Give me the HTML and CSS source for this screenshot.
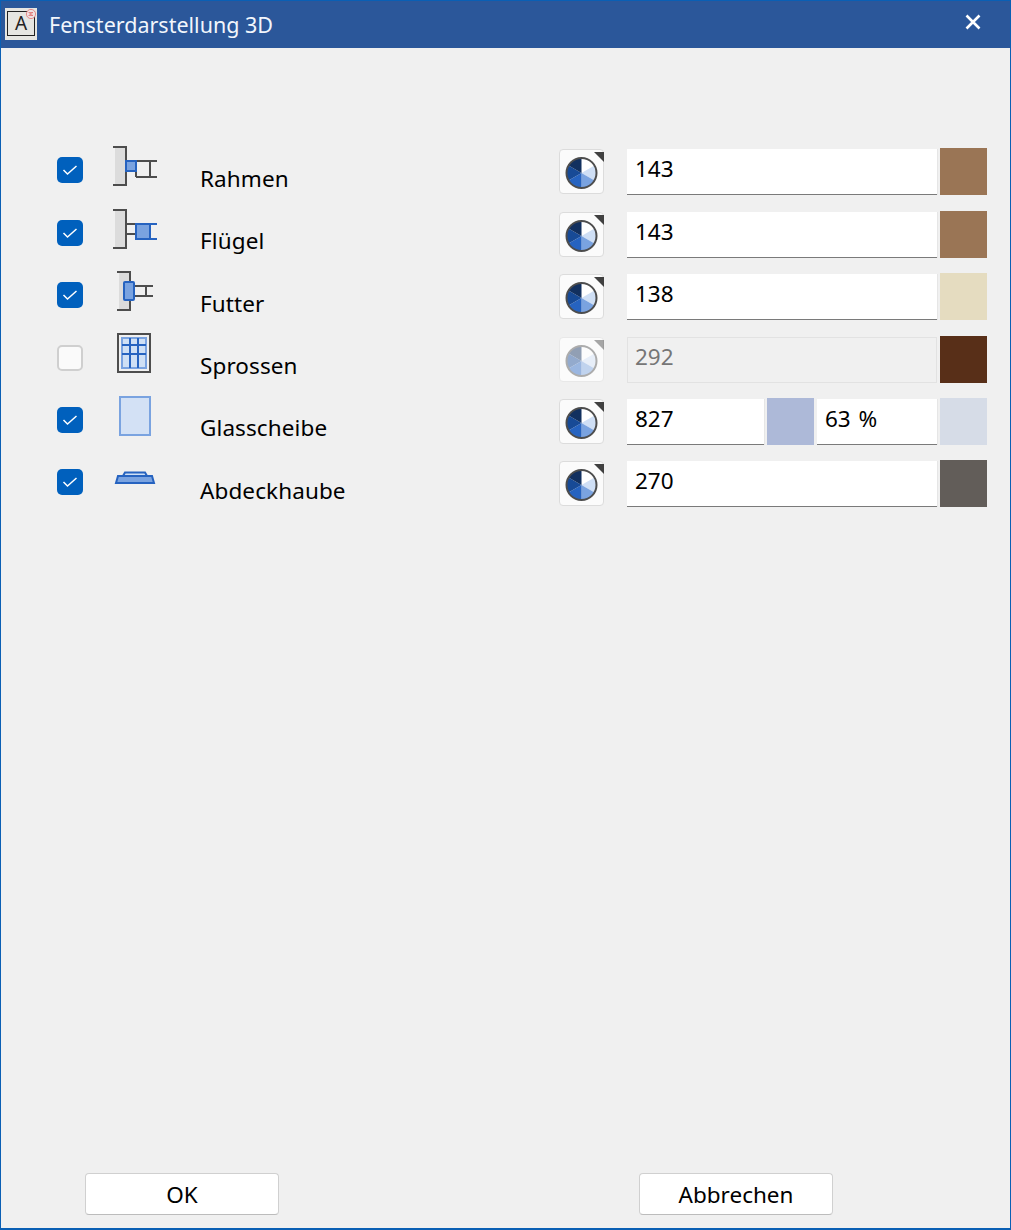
FILE: index.html
```html
<!DOCTYPE html>
<html lang="de">
<head>
<meta charset="utf-8">
<title>Fensterdarstellung 3D</title>
<link rel="stylesheet" href="styles.css">
</head>
<body>
<svg class="defs" width="0" height="0" aria-hidden="true">
  <defs>
    <symbol id="check" viewBox="0 0 26 26"><path d="M6.5 13 L10.5 17 L19.5 9" fill="none" stroke="#fff" stroke-width="1.5"/></symbol>
    <symbol id="pie" viewBox="0 0 45 45">
      <path d="M22.5 9 L22.5 24 L35.5 16.5 A15 15 0 0 0 22.5 9Z" fill="#ffffff"/>
      <path d="M22.5 24 L35.5 16.5 A15 15 0 0 1 35.5 31.5Z" fill="#cfdff5"/>
      <path d="M22.5 24 L35.5 31.5 A15 15 0 0 1 22.5 39Z" fill="#7aa3e0"/>
      <path d="M22.5 24 L22.5 39 A15 15 0 0 1 9.5 31.5Z" fill="#2663c0"/>
      <path d="M22.5 24 L9.5 31.5 A15 15 0 0 1 9.5 16.5Z" fill="#174a96"/>
      <path d="M22.5 24 L9.5 16.5 A15 15 0 0 1 22.5 9Z" fill="#12305f"/>
      <circle cx="22.5" cy="24" r="15" fill="none" stroke="#4d4d4d" stroke-width="2"/>
      <path d="M35 3 H45 V13Z" fill="#404040"/>
    </symbol>
  </defs>
</svg>
<div class="window">
  <header class="titlebar">
    <div class="app-icon"><span class="app-letter">A</span>
      <svg class="app-badge" width="12" height="12" viewBox="0 0 12 12"><circle cx="6" cy="6" r="4.6" fill="#efe2e2" stroke="#e58a8a" stroke-width="1"/><path d="M3.5 4.5 H8 L4.5 6 L8 7.5 H3.5" fill="none" stroke="#e07070" stroke-width=".8"/></svg>
    </div>
    <span class="title">Fensterdarstellung 3D</span>
    <svg class="close" width="16" height="16" viewBox="0 0 16 16"><path d="M1.5 1.5 L14.5 14.5 M14.5 1.5 L1.5 14.5" stroke="#fff" stroke-width="2.6"/></svg>
  </header>

  <main class="content">
    <div class="row">
      <span class="cb on"><svg width="26" height="26"><use href="#check"/></svg></span>
      <svg class="icon" viewBox="0 0 50 44"><rect x="5" y="3" width="11" height="38" fill="#dcdcdc"/><path d="M3 3 H16 V41 H3 M26 17 H47 M26 33 H47 M26 17 V33 M40 17 V33" fill="none" stroke="#4d4d4d" stroke-width="2"/><rect x="16" y="17" width="10" height="10" fill="#7aa3e0" stroke="#2663c0" stroke-width="2"/></svg>
      <span class="label">Rahmen</span>
      <span class="pick"><svg width="45" height="45"><use href="#pie"/></svg></span>
      <span class="fields"><span class="field grow">143</span></span>
      <span class="swatch c143"></span>
    </div>
    <div class="row">
      <span class="cb on"><svg width="26" height="26"><use href="#check"/></svg></span>
      <svg class="icon" viewBox="0 0 50 44"><rect x="5" y="3" width="11" height="38" fill="#dcdcdc"/><path d="M3 3 H16 V41 H3 M16 17 H26 M16 27 H26" fill="none" stroke="#4d4d4d" stroke-width="2"/><rect x="26" y="17" width="14" height="15" fill="#7aa3e0"/><path d="M47 17 H26 V32 H47 M40 17 V32" fill="none" stroke="#2663c0" stroke-width="2"/></svg>
      <span class="label">Flügel</span>
      <span class="pick"><svg width="45" height="45"><use href="#pie"/></svg></span>
      <span class="fields"><span class="field grow">143</span></span>
      <span class="swatch c143"></span>
    </div>
    <div class="row">
      <span class="cb on"><svg width="26" height="26"><use href="#check"/></svg></span>
      <svg class="icon" viewBox="0 0 50 44"><rect x="9" y="3" width="11" height="38" fill="#dcdcdc"/><path d="M7 3 H20 V41 H7 M24 17 H43 M24 27 H43 M36 17 V27" fill="none" stroke="#4d4d4d" stroke-width="2"/><rect x="14" y="13" width="10" height="18" rx="1" fill="#7aa3e0" stroke="#2663c0" stroke-width="2"/></svg>
      <span class="label">Futter</span>
      <span class="pick"><svg width="45" height="45"><use href="#pie"/></svg></span>
      <span class="fields"><span class="field grow">138</span></span>
      <span class="swatch c138"></span>
    </div>
    <div class="row">
      <span class="cb"></span>
      <svg class="icon" viewBox="0 0 50 44"><rect x="8" y="2" width="32" height="38" fill="none" stroke="#4d4d4d" stroke-width="2"/><rect x="12" y="6" width="24" height="30" fill="#cfe0f5" stroke="#7aa3e0" stroke-width="2"/><path d="M20 6 V36 M28 6 V36 M12 13 H36 M12 22 H36" stroke="#2663c0" stroke-width="2"/></svg>
      <span class="label">Sprossen</span>
      <span class="pick off"><svg width="45" height="45"><use href="#pie"/></svg></span>
      <span class="fields"><span class="field grow disabled">292</span></span>
      <span class="swatch c292"></span>
    </div>
    <div class="row">
      <span class="cb on"><svg width="26" height="26"><use href="#check"/></svg></span>
      <svg class="icon" viewBox="0 0 50 44"><rect x="10" y="3" width="30" height="38" fill="#d3e1f5" stroke="#7aa3e0" stroke-width="2"/></svg>
      <span class="label">Glasscheibe</span>
      <span class="pick"><svg width="45" height="45"><use href="#pie"/></svg></span>
      <span class="fields"><span class="field f827">827</span><span class="swatch c827"></span><span class="field grow">63 %</span></span>
      <span class="swatch c63"></span>
    </div>
    <div class="row">
      <span class="cb on"><svg width="26" height="26"><use href="#check"/></svg></span>
      <svg class="icon" viewBox="0 0 50 44"><path d="M13 20 L15 16.5 H35 L37 20Z" fill="#cfe0f5" stroke="#2663c0" stroke-width="2"/><path d="M8 20 H42 L44 27 H6Z" fill="#7aa3e0" stroke="#2663c0" stroke-width="2"/></svg>
      <span class="label">Abdeckhaube</span>
      <span class="pick"><svg width="45" height="45"><use href="#pie"/></svg></span>
      <span class="fields"><span class="field grow">270</span></span>
      <span class="swatch c270"></span>
    </div>
  </main>

  <footer class="footer">
    <span class="btn">OK</span>
    <span class="btn">Abbrechen</span>
  </footer>
</div>
</body>
</html>
```

FILE: styles.css
```css
* { box-sizing: border-box; }
html, body { margin: 0; padding: 0; }
body { font-family: "Noto Sans", "Open Sans", sans-serif; color: #000; background: #f0f0f0; }
.defs { position: absolute; }

.window {
  width: 1011px;
  height: 1230px;
  display: flex;
  flex-direction: column;
  border: 1px solid #0a5fb4;
  border-width: 1px 1px 2px 1px;
  background: #f0f0f0;
}

.titlebar {
  height: 47px;
  flex: none;
  display: flex;
  align-items: center;
  background: #2b579a;
  padding: 0 29px 1px 4px;
}
.app-icon {
  position: relative;
  width: 32px;
  height: 32px;
  background: #e6e6e2;
  padding: 3px 2px 4px 2px;
  display: flex;
}
.app-letter {
  flex: 1;
  border: 1px solid #222;
  font-size: 19px;
  line-height: 23px;
  text-align: center;
  color: #222;
}
.app-badge { position: absolute; top: 0; right: 0; }
.title {
  margin-left: 12px;
  font-size: 21.5px;
  color: #f2f6fc;
  flex: 1;
}
.close { flex: none; margin-bottom: 4px; }

.content {
  flex: 1;
  padding: 100.2px 23px 0 56px;
  display: flex;
  flex-direction: column;
  gap: 15.45px;
}

.row {
  height: 47px;
  flex: none;
  display: grid;
  grid-template-columns: 26px 77px 399px 45px 336px 47px;
  align-items: start;
}

.cb {
  width: 26px;
  height: 26px;
  margin-top: 9px;
  border-radius: 5px;
  background: #fafafa;
  border: 2px solid #cfcfcf;
  display: block;
}
.cb.on { background: #0060bd; border: 0; }
.cb svg { display: block; }

.icon {
  width: 50px;
  height: 44px;
  margin: -4px 0 0 27px;
  overflow: visible;
}
.label {
  padding-left: 40px;
  font-size: 22.5px;
  letter-spacing: .1px;
  line-height: 30px;
  margin-top: 15.5px;
  white-space: nowrap;
}

.pick {
  width: 45px;
  height: 45px;
  margin-top: 1px;
  background: #fbfbfb;
  border: 1px solid #dcdcdc;
  border-radius: 4px;
  display: block;
  position: relative;
}
.pick svg { position: absolute; left: -1px; top: -1px; display: block; }
.pick.off { border-color: #e8e8e8; }
.pick.off svg { opacity: .45; }

.fields {
  margin-left: 23px;
  display: flex;
  gap: 3px;
  width: 310px;
}
.field {
  height: 46px;
  margin-top: 1px;
  background: #fff;
  border-bottom: 1px solid #7a7a7a;
  box-shadow: 1px 0 0 #e6e6e6;
  padding: 5px 8px 0;
  font-size: 22.5px;
  line-height: 30px;
  word-spacing: 2px;
  align-self: flex-start;
}
.grow { flex: 1; }
.f827 { width: 137px; flex: none; }
.field.disabled {
  background: #f0f0f0;
  border: 1px solid #e2e2e2;
  box-shadow: none;
  color: #767676;
  padding: 4px 7px 0;
}

.swatch { width: 47px; height: 47px; display: block; flex: none; }
.c143 { background: #9a7555; }
.c138 { background: #e5dcc0; }
.c292 { background: #582f18; }
.c827 { background: #adb9d8; }
.c63  { background: #d6dce7; }
.c270 { background: #625d59; }

.footer {
  flex: none;
  display: flex;
  gap: 360px;
  padding: 0 0 13px 84px;
}
.btn {
  width: 194px;
  height: 42px;
  background: #fff;
  border: 1px solid #d0d0d0;
  border-bottom-color: #bcbcbc;
  border-radius: 4px;
  font-size: 22.5px;
  line-height: 42px;
  text-align: center;
}
```
